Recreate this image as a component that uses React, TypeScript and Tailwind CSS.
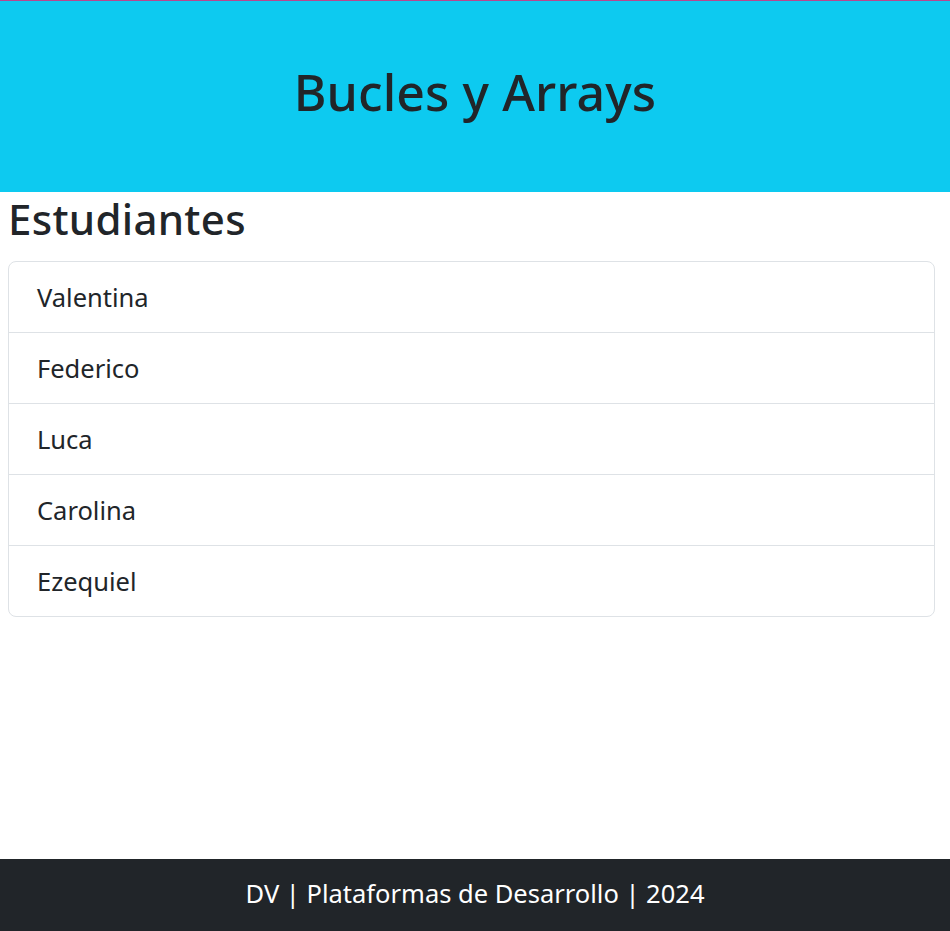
import React from "react";

const students = ["Valentina", "Federico", "Luca", "Carolina", "Ezequiel"];

export default function App() {
  return (
    <div
      className="min-h-screen flex flex-col bg-white text-[#212529]"
      style={{ fontFamily: '"Noto Sans", "Open Sans", sans-serif' }}
    >
      <header className="h-[192px] border-t border-[#b9478f] bg-[#0dcaf0] flex items-center justify-center">
        <h1 className="text-[50px] font-medium leading-[1.2] pb-[10px] tracking-[0.1px]">Bucles y Arrays</h1>
      </header>

      <main className="flex-1 pl-[8px] pr-[15px]">
        <h2 className="text-[42px] font-medium leading-[1.2] mt-[2px] mb-[17px] tracking-[0.3px]">Estudiantes</h2>
        <ul className="border border-[#dee2e6] rounded-[8px]">
          {students.map((name, i) => (
            <li
              key={name}
              className={
                "px-[28px] py-[17px] text-[25.5px] leading-[36px] " +
                (i > 0 ? "border-t border-[#dee2e6]" : "")
              }
            >
              {name}
            </li>
          ))}
        </ul>
      </main>

      <footer className="h-[72px] bg-[#212529] text-white flex items-center justify-center text-[25.5px] pb-[3px]">
        DV | Plataformas de Desarrollo | 2024
      </footer>
    </div>
  );
}
